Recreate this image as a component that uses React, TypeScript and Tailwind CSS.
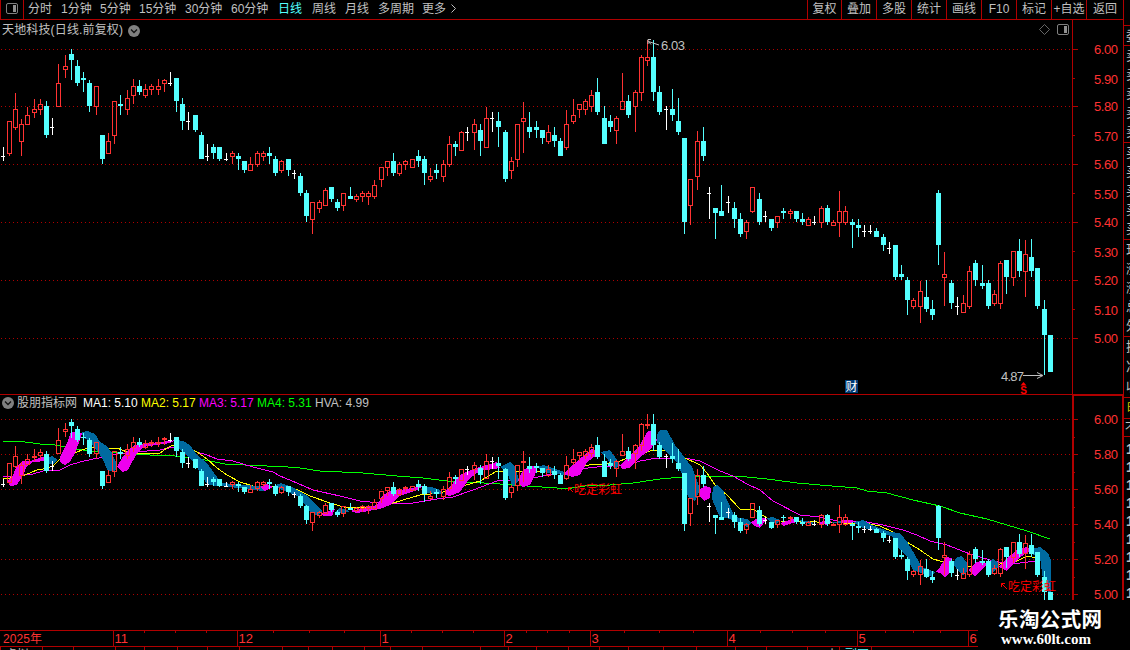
import React from 'react';
import { clsx } from 'clsx';

type Kind = 'r' | 'c' | 'w';
// x, high, body top, body bottom, low, kind (up / down / doji)
type Candle = [number, number, number, number, number, Kind];

const candles: Candle[] = [
  [3, 147, 156, 157, 161, 'w'], [9, 121, 121, 154, 156, 'r'], [15, 93, 109, 128, 130, 'r'], [21, 119, 124, 142, 156, 'r'],
  [27, 107, 115, 125, 125, 'r'], [34, 99, 109, 113, 118, 'r'], [40, 99, 104, 110, 115, 'r'], [46, 101, 106, 135, 138, 'c'],
  [52, 118, 127, 128, 135, 'w'], [58, 64, 83, 107, 107, 'r'], [65, 55, 66, 70, 78, 'r'], [71, 49, 54, 60, 80, 'c'],
  [77, 60, 66, 83, 86, 'c'], [83, 72, 78, 80, 92, 'c'], [89, 80, 83, 106, 112, 'c'], [96, 86, 86, 107, 115, 'r'],
  [102, 135, 135, 159, 164, 'c'], [108, 133, 141, 154, 154, 'r'], [114, 101, 101, 136, 144, 'r'], [120, 95, 104, 106, 115, 'c'],
  [127, 90, 98, 110, 115, 'r'], [133, 79, 86, 96, 104, 'r'], [139, 80, 86, 92, 95, 'c'], [145, 84, 89, 96, 98, 'r'],
  [151, 84, 86, 90, 95, 'r'], [158, 79, 86, 90, 95, 'r'], [164, 79, 80, 84, 92, 'r'], [170, 72, 83, 84, 86, 'w'],
  [176, 78, 78, 101, 112, 'c'], [182, 98, 104, 121, 130, 'c'], [188, 112, 121, 122, 130, 'w'], [195, 115, 115, 130, 132, 'c'],
  [201, 132, 135, 159, 159, 'c'], [207, 144, 156, 157, 161, 'w'], [213, 144, 147, 153, 159, 'c'], [219, 147, 147, 159, 161, 'c'],
  [226, 153, 159, 160, 161, 'w'], [232, 151, 153, 157, 164, 'r'], [238, 153, 156, 159, 170, 'c'], [244, 161, 161, 170, 173, 'c'],
  [250, 157, 164, 171, 171, 'r'], [257, 151, 153, 165, 167, 'r'], [263, 151, 153, 157, 161, 'r'], [269, 147, 153, 156, 164, 'c'],
  [275, 156, 159, 173, 176, 'c'], [281, 160, 161, 171, 173, 'r'], [288, 159, 159, 170, 176, 'c'], [294, 170, 173, 174, 179, 'w'],
  [300, 173, 176, 193, 196, 'c'], [306, 190, 193, 216, 222, 'c'], [312, 202, 202, 220, 234, 'r'], [319, 200, 202, 209, 213, 'r'],
  [325, 188, 190, 206, 206, 'r'], [331, 187, 187, 199, 202, 'c'], [337, 199, 202, 208, 211, 'c'], [343, 193, 193, 206, 211, 'r'],
  [350, 187, 196, 199, 199, 'c'], [356, 194, 196, 200, 202, 'r'], [362, 191, 193, 197, 202, 'r'], [368, 191, 193, 197, 205, 'r'],
  [374, 180, 185, 197, 199, 'r'], [381, 167, 167, 180, 187, 'r'], [387, 161, 161, 168, 176, 'r'], [393, 153, 161, 173, 176, 'c'],
  [399, 162, 164, 174, 176, 'r'], [405, 160, 161, 165, 170, 'r'], [412, 159, 159, 168, 168, 'r'], [418, 150, 156, 161, 167, 'c'],
  [424, 156, 159, 173, 185, 'c'], [430, 168, 176, 180, 182, 'r'], [436, 164, 170, 173, 179, 'c'], [443, 160, 164, 177, 182, 'r'],
  [449, 136, 144, 165, 167, 'r'], [455, 141, 144, 147, 156, 'c'], [461, 131, 132, 151, 151, 'r'], [467, 127, 132, 133, 141, 'w'],
  [474, 119, 124, 133, 150, 'r'], [480, 124, 130, 141, 156, 'c'], [486, 107, 118, 148, 148, 'r'], [492, 112, 118, 119, 132, 'w'],
  [498, 112, 121, 127, 147, 'c'], [505, 130, 132, 179, 182, 'c'], [511, 157, 161, 171, 179, 'r'], [517, 124, 124, 160, 167, 'r'],
  [523, 102, 118, 122, 153, 'r'], [529, 112, 127, 132, 138, 'c'], [536, 121, 127, 130, 138, 'c'], [542, 130, 130, 138, 144, 'c'],
  [548, 125, 132, 142, 144, 'r'], [554, 127, 135, 141, 147, 'c'], [560, 138, 141, 156, 156, 'c'], [566, 110, 124, 148, 150, 'r'],
  [573, 99, 115, 122, 124, 'r'], [579, 104, 104, 110, 118, 'r'], [585, 99, 101, 110, 115, 'r'], [591, 90, 95, 107, 112, 'r'],
  [597, 78, 92, 112, 115, 'c'], [604, 106, 118, 144, 144, 'c'], [610, 115, 121, 127, 132, 'c'], [616, 116, 118, 131, 144, 'r'],
  [622, 73, 101, 110, 110, 'r'], [628, 95, 101, 115, 118, 'c'], [635, 90, 92, 107, 132, 'r'], [641, 55, 57, 93, 101, 'r'],
  [647, 40, 57, 61, 66, 'r'], [653, 40, 57, 92, 101, 'c'], [659, 86, 92, 112, 115, 'c'], [666, 106, 109, 110, 130, 'w'],
  [672, 89, 109, 115, 121, 'c'], [678, 98, 121, 132, 135, 'c'], [684, 138, 138, 222, 234, 'c'], [690, 179, 179, 206, 225, 'r'],
  [697, 131, 141, 177, 190, 'r'], [703, 127, 141, 156, 161, 'c'], [709, 187, 193, 194, 219, 'w'], [715, 208, 208, 213, 239, 'c'],
  [721, 185, 211, 216, 216, 'c'], [728, 196, 202, 203, 213, 'w'], [734, 202, 208, 219, 228, 'c'], [740, 213, 219, 234, 237, 'c'],
  [746, 220, 222, 232, 239, 'r'], [752, 187, 187, 212, 213, 'r'], [759, 193, 199, 222, 225, 'c'], [765, 211, 216, 217, 222, 'w'],
  [771, 219, 219, 228, 231, 'c'], [777, 216, 216, 223, 228, 'r'], [783, 208, 211, 213, 219, 'c'], [790, 209, 211, 214, 219, 'r'],
  [796, 211, 211, 219, 222, 'c'], [802, 213, 219, 222, 225, 'c'], [808, 217, 219, 226, 226, 'r'], [814, 216, 222, 223, 225, 'w'],
  [821, 206, 208, 223, 228, 'r'], [827, 205, 208, 222, 225, 'c'], [833, 220, 222, 226, 226, 'r'], [839, 191, 211, 223, 237, 'r'],
  [845, 206, 211, 223, 225, 'r'], [852, 219, 222, 225, 248, 'c'], [858, 219, 225, 228, 237, 'c'], [864, 225, 231, 232, 237, 'w'],
  [870, 225, 231, 232, 234, 'w'], [876, 228, 231, 237, 237, 'c'], [883, 234, 237, 245, 251, 'c'], [889, 242, 248, 249, 254, 'w'],
  [895, 245, 245, 277, 280, 'c'], [901, 265, 274, 277, 280, 'c'], [907, 277, 280, 300, 315, 'c'], [913, 298, 300, 307, 309, 'r'],
  [920, 281, 291, 307, 323, 'r'], [926, 280, 297, 309, 312, 'c'], [932, 300, 309, 315, 320, 'c'], [938, 190, 193, 245, 265, 'c'],
  [944, 252, 274, 278, 306, 'r'], [951, 280, 283, 303, 309, 'c'], [957, 297, 306, 307, 315, 'w'], [963, 295, 303, 313, 313, 'r'],
  [969, 266, 271, 307, 309, 'r'], [975, 260, 263, 280, 286, 'c'], [982, 265, 283, 286, 289, 'c'], [988, 280, 283, 306, 309, 'c'],
  [994, 290, 294, 304, 306, 'r'], [1000, 261, 263, 304, 309, 'r'], [1006, 260, 260, 277, 294, 'c'], [1013, 251, 251, 278, 286, 'r'],
  [1019, 239, 251, 271, 277, 'c'], [1025, 240, 254, 272, 297, 'r'], [1031, 239, 257, 271, 277, 'c'], [1037, 268, 268, 306, 309, 'c'],
  [1044, 300, 309, 335, 375, 'c'], [1050, 335, 335, 372, 372, 'c'],
];

const UP = '#ff3232';
const DOWN = '#54ffff';
const LINE = '#b00000';

const mainY = (y: number) => y;
// the indicator panel squeezes the same prices into a smaller scale
const subY = (y: number) => Math.round(419.5 + (y - 49.5) * 0.6055);

const months: [number, string][] = [
  [113, '11'], [237, '12'], [380, '1'], [504, '2'], [590, '3'], [727, '4'], [857, '5'], [968, '6'],
];
const weekTicks = [144, 175, 206, 273, 309, 344, 411, 442, 473, 526, 547, 569, 624, 659, 693, 760, 792, 825, 885, 913, 940];
const bottomTicks = [
  0, 42, 73, 115, 144, 177, 207, 239, 282, 308, 332, 364, 390, 422, 480, 508, 536, 568, 599, 628, 663, 696, 735, 766, 807, 839, 871,
];

const pinkBands = [
  '8,480 13,475 16,468 22,461 30,461 43,457 47,458 47,461 33,462 27,466 23,475 17,485 10,486',
  '60,457 67,443 71,432 82,433 80,440 75,453 70,462 65,465 60,462',
  '117,467 122,458 128,450 135,445 150,443 177,440 170,443 143,447 137,453 128,470 123,472',
  '260,487 267,484 273,487 265,491',
  '322,513 335,509 332,516 323,516',
  '350,511 377,505 383,495 392,490 400,490 423,486 417,490 400,496 390,505 380,509 357,513',
  '445,492 453,483 460,475 473,469 497,462 500,468 480,471 470,478 460,492 450,496 445,495',
  '518,480 523,470 530,466 537,466 535,475 530,485 523,487 520,485',
  '563,474 573,465 582,457 592,449 598,451 597,455 587,462 580,475 572,477 567,475',
  '620,465 632,453 640,445 647,432 652,430 657,440 650,450 640,457 630,468 622,469',
  '699,490 705,486 711,488 710,498 704,501 700,497',
  '751,522 760,517 767,519 760,528 753,525',
  '780,523 793,519 800,521 783,526',
  '817,523 827,520 832,522 827,525',
  '842,520 853,520 853,523 842,523',
  '935,572 940,567 946,557 952,558 950,572 945,577 940,573',
  '968,570 977,562 983,560 987,565 975,576',
  '998,567 1007,558 1017,550 1027,547 1032,550 1020,557 1007,571 1001,568',
];

const blueBands = [
  '48,458 52,456 58,460 53,464 48,464',
  '82,432 88,431 95,434 100,442 107,446 112,453 117,465 115,472 108,471 102,458 98,452 88,440 83,437',
  '177,440 183,441 190,445 197,455 207,463 217,477 222,483 247,485 267,487 263,491 230,487 208,485 203,478 197,467 190,458 177,447',
  '275,485 281,483 292,487 306,495 317,505 322,511 318,516 308,510 300,497 280,489',
  '335,512 340,508 350,511 343,514',
  '423,487 432,487 440,490 443,494 437,494 427,493',
  '500,467 510,462 515,467 519,480 513,487 510,480 507,472',
  '537,467 543,465 553,468 567,473 570,476 543,472',
  '600,452 610,450 615,457 620,465 615,469 608,460',
  '657,435 660,430 667,430 675,445 685,458 692,467 697,480 700,490 695,501 688,497 683,477 677,462 667,453 657,442',
  '712,497 713,487 717,485 723,490 727,500 733,513 735,517 747,519 752,523 747,527 740,523 727,518 720,517 713,502',
  '767,518 773,517 780,520 777,524 770,522',
  '800,520 813,522 813,524 802,523',
  '832,522 842,521 842,523 832,523',
  '853,522 863,520 872,525 890,532 900,533 908,543 915,555 922,567 935,572 932,577 913,570 907,557 898,547 893,537 873,530 863,528',
  '953,563 957,557 962,556 967,563 967,572 963,575 957,570',
  '987,563 993,559 998,562 998,568 990,575',
  '1032,549 1040,547 1048,553 1051,560 1051,600 1043,580 1040,557 1033,555',
];

const ma4 =
  '3,441 25,442 40,444 55,445 75,449 100,452 122,453 150,455 175,456 200,459 225,464 245,465 288,467 300,468 320,471 363,473 397,476 423,478 447,481 467,482 500,484 527,486 557,488 572,488 585,486 610,485 633,483 660,479 683,477 707,476 737,476 767,479 797,483 820,485 857,488 867,491 887,493 913,500 940,506 960,513 987,519 1007,525 1027,531 1050,539';
const ma3 =
  '3,477 23,475 33,474 43,471 60,470 70,465 80,462 93,459 105,457 117,454 133,452 147,451 160,450 173,447 187,449 197,452 207,455 217,459 233,461 253,467 273,472 280,476 297,483 313,490 340,496 360,501 380,503 413,503 437,499 453,497 473,490 497,481 513,480 533,478 547,475 570,472 580,469 597,467 627,465 640,461 657,458 685,458 700,461 720,471 733,476 747,484 760,490 773,501 800,515 820,517 837,521 867,522 883,525 903,530 917,535 930,541 947,545 970,554 990,560 1003,563 1020,563 1037,561';
const ma2 =
  '3,478 10,478 25,475 37,470 43,469 53,466 60,459 77,452 90,447 102,450 117,448 127,452 133,454 160,453 167,448 173,445 187,448 197,452 207,459 217,468 227,475 240,482 253,486 267,486 280,487 293,488 300,491 310,496 330,503 347,508 370,507 390,504 403,500 420,495 440,493 463,486 480,481 497,471 523,471 547,472 560,474 570,471 580,467 593,464 603,464 620,461 633,456 650,451 677,450 683,457 700,465 707,473 715,485 727,495 740,509 753,509 767,518 780,521 817,522 870,524 880,526 893,532 907,542 920,550 933,559 940,561 953,565 970,567 1000,564 1017,561 1027,556 1037,558';

function Candles({ mapY }: { mapY: (y: number) => number }) {
  return (
    <g shapeRendering="crispEdges">
      {candles.map(([x, high, top, bottom, low, kind]) => {
        const h = mapY(high);
        const t = mapY(top);
        const b = Math.max(mapY(bottom), t + 1);
        const l = Math.max(mapY(low), b);
        const color = kind === 'r' ? UP : kind === 'c' ? DOWN : '#fff';
        if (kind !== 'r') {
          return (
            <g key={x} fill={color}>
              <rect x={x} y={h} width={1} height={l - h} />
              <rect x={x - 2} y={t} width={kind === 'c' ? 5 : 4} height={b - t} />
            </g>
          );
        }
        // hollow body drawn as four filled edges to stay exactly one pixel wide
        return (
          <g key={x} fill={color}>
            <rect x={x} y={h} width={1} height={t - h} />
            <rect x={x} y={b} width={1} height={l - b} />
            <rect x={x - 2} y={t} width={5} height={1} />
            <rect x={x - 2} y={b - 1} width={5} height={1} />
            <rect x={x - 2} y={t} width={1} height={b - t} />
            <rect x={x + 2} y={t} width={1} height={b - t} />
          </g>
        );
      })}
    </g>
  );
}

function Grid({ ys }: { ys: number[] }) {
  return (
    <g stroke={LINE} strokeDasharray="1 3" shapeRendering="crispEdges">
      {ys.map((y) => (
        <line key={y} x1={1} x2={1072} y1={y + 0.5} y2={y + 0.5} />
      ))}
    </g>
  );
}

function Scale({ major, minor, labels }: { major: number[]; minor: number[]; labels: [number, string][] }) {
  return (
    <g fill={LINE} shapeRendering="crispEdges">
      {major.map((y) => <rect key={y} x={1073} y={y} width={5} height={1} />)}
      {minor.map((y) => <rect key={y} x={1073} y={y} width={2} height={1} />)}
      {labels.map(([y, text]) => (
        <text key={y} x={1094} y={y + 5} fill={UP} fontSize={13} textLength={24}>{text}</text>
      ))}
    </g>
  );
}

function ChevronBadge() {
  return (
    <svg width="12" height="12" viewBox="0 0 12 12">
      <circle cx="6" cy="6" r="6" fill="#808080" />
      <path d="M3 4.5 6 7.5 9 4.5" fill="none" stroke="#111" strokeWidth="1.3" />
    </svg>
  );
}

function PanelIcon({ className }: { className?: string }) {
  return (
    <svg width="12" height="11" viewBox="0 0 12 11" className={className}>
      <rect x="0.5" y="0.5" width="11" height="10" rx="1.5" fill="none" stroke="#808080" />
      <rect x="7" y="2" width="3" height="7" fill="#909090" />
    </svg>
  );
}

const periods = [
  { label: '分时', width: 'w-[33px]' },
  { label: '1分钟', width: 'w-[39px]' },
  { label: '5分钟', width: 'w-[39px]' },
  { label: '15分钟', width: 'w-[46px]' },
  { label: '30分钟', width: 'w-[46px]' },
  { label: '60分钟', width: 'w-[47px]' },
  { label: '日线', width: 'w-[34px]', active: true },
  { label: '周线', width: 'w-[33px]' },
  { label: '月线', width: 'w-[33px]' },
  { label: '多周期', width: 'w-[44px]' },
  { label: '更多', width: 'w-[28px]' },
];

const tools = ['复权', '叠加', '多股', '统计', '画线', 'F10', '标记', '+自选', '返回'];

function Toolbar() {
  return (
    <nav className="flex h-[20px] w-[1124px] border-b border-[#b00000]">
      <div className="flex w-[24px] justify-center border-x border-[#b00000] pt-[3px]">
        <PanelIcon />
      </div>
      <div className="flex pl-1 leading-[19px]">
        {periods.map((p) => (
          <span key={p.label} className={clsx('whitespace-nowrap', p.width, p.active && 'text-[#54ffff]')}>
            {p.label}
          </span>
        ))}
        <svg width="8" height="18" viewBox="0 0 8 18" fill="none" stroke="#c0c0c0">
          <path d="M1.5 4.5 5.5 8.5 1.5 12.5" />
        </svg>
      </div>
      <div className="ml-auto flex leading-[19px]">
        {tools.map((t, i) => (
          <span
            key={t}
            className={clsx(
              'border-l border-[#b00000] text-center whitespace-nowrap',
              i === 0 ? 'w-[34px]' : i === tools.length - 1 ? 'w-[38px] border-r' : 'w-[35px]',
            )}
          >
            {t}
          </span>
        ))}
      </div>
    </nav>
  );
}

function PricePanel() {
  return (
    <section className="relative h-[374px]">
      <svg width="1124" height="374" viewBox="0 20 1124 374">
        <Grid ys={[49, 106, 164, 222, 280, 338]} />
        <Candles mapY={mainY} />
        <rect x={1072} y={20} width={1} height={374} fill={LINE} />
        <Scale
          major={[49, 106, 164, 222, 280, 338]}
          minor={[78, 135, 193, 251, 309]}
          labels={[
            [49, '6.00'], [79, '5.90'], [106, '5.80'], [136, '5.70'], [164, '5.60'], [194, '5.50'],
            [222, '5.40'], [252, '5.30'], [280, '5.20'], [310, '5.10'], [338, '5.00'],
          ]}
        />
        {/* high and low markers */}
        <g fill="none" stroke="#c0c0c0">
          <path d="M659 45 L648.5 41.5 M651 39.5 H648 V44 M648.5 41.5 L651 44.5" />
          <path d="M1023 375.5 H1042 M1037 372.5 L1043 375.5 L1037 378.5" />
        </g>
        <text x={661} y={50} fontSize={13} fill="#c0c0c0" textLength={24}>6.03</text>
        <text x={1001} y={381} fontSize={13} fill="#c0c0c0" textLength={23}>4.87</text>
        <rect x={845} y={380} width={13} height={13} fill="#003a74" />
        <text x={845.5} y={391} fontSize={12} fill="#fff">财</text>
        <path d="M1020.5 385.5 L1023.5 382 L1026.5 385.5 Z" fill="#f00" />
        <text x={1020.3} y={393.5} fontSize={10} fontWeight={700} fill="#f00">S</text>
        <path d="M1044.5 24.5 L1049.5 29.5 L1044.5 34.5 L1039.5 29.5 Z" fill="none" stroke="#808080" strokeWidth={0.8} />
      </svg>
      <div className="absolute top-[2px] left-[2px] flex items-center gap-[3px] leading-[17px]">
        <span className="w-[123px] tracking-[0.15px] whitespace-nowrap">天地科技(日线.前复权)</span>
        <ChevronBadge />
      </div>
      <PanelIcon className="absolute top-[4px] left-[1057px]" />
    </section>
  );
}

function IndicatorPanel() {
  return (
    <section className="relative h-[236px] border-t border-[#b00000]">
      <svg width="1124" height="235" viewBox="0 395 1124 235">
        <Grid ys={[419, 454, 489, 524, 559, 594]} />
        <g fill="none" shapeRendering="crispEdges">
          <polyline points={ma4} stroke="#00ff00" />
          <polyline points={ma3} stroke="#ff00ff" />
          <polyline points={ma2} stroke="#ffff00" />
        </g>
        <g shapeRendering="crispEdges">
          {blueBands.map((p) => <polygon key={p} points={p} fill="#006aa0" />)}
          {pinkBands.map((p) => <polygon key={p} points={p} fill="#ee00ee" />)}
        </g>
        <Candles mapY={subY} />
        <g fill="none" stroke="#f00">
          <path d="M573 492 L568.5 487.5 M568.5 491 V487.5 H572" />
          <path d="M1007 589 L1001.5 583.5 M1001.5 587 V583.5 H1005" />
        </g>
        <text x={574} y={494} fontSize={12} fill="#f00" textLength={48}>吃定彩虹</text>
        <text x={1008} y={591} fontSize={12} fill="#f00" textLength={48}>吃定彩虹</text>
        <g fill={LINE} shapeRendering="crispEdges">
          <rect x={1072} y={395} width={2} height={205} />
          <rect x={1122} y={395} width={2} height={205} />
          <rect x={1072} y={395} width={52} height={1} />
        </g>
        <Scale
          major={[419, 454, 489, 524, 559, 594]}
          minor={[437, 472, 507, 542, 577]}
          labels={[[419, '6.00'], [454, '5.80'], [489, '5.60'], [524, '5.40'], [559, '5.20'], [594, '5.00']]}
        />
      </svg>
      <div className="absolute top-0 left-[2px] flex items-center leading-[16px] whitespace-nowrap">
        <ChevronBadge />
        <span className="ml-[3px] w-[66px]">股朋指标网</span>
        <span className="w-[58px] text-white">MA1: 5.10</span>
        <span className="w-[58px] text-[#ffff00]">MA2: 5.17</span>
        <span className="w-[58px] text-[#ff00ff]">MA3: 5.17</span>
        <span className="w-[58px] text-[#00ff00]">MA4: 5.31</span>
        <span>HVA: 4.99</span>
      </div>
    </section>
  );
}

function TimeAxis() {
  return (
    <svg width="1124" height="20" viewBox="0 630 1124 20">
      <g fill={LINE} shapeRendering="crispEdges">
        <rect x={0} y={630} width={978} height={1} />
        <rect x={0} y={646} width={978} height={1} />
        {months.map(([x]) => <rect key={x} x={x} y={630} width={1} height={16} />)}
        {weekTicks.map((x) => <rect key={x} x={x} y={631} width={1} height={2} />)}
        {bottomTicks.map((x) => <rect key={x} x={x} y={647} width={1} height={3} />)}
      </g>
      <g fontSize={13} fill={UP}>
        <text x={3} y={643} textLength={39} fontSize={12}>2025年</text>
        {months.map(([x, label]) => <text key={x} x={x + 1.5} y={643}>{label}</text>)}
      </g>
      <g fontSize={12} fill="#c0c0c0">
        <text x={5} y={659}>虚拟</text>
        <text x={826} y={659}>小</text>
        <text x={845} y={658.5} fill={DOWN}>副图</text>
      </g>
    </svg>
  );
}

const quoteGroups = [
  { height: 'h-[20px]', rows: ['委'] },
  { height: 'h-[97px]', rows: ['卖', '卖', '卖', '卖', '卖'] },
  { height: 'h-[97px]', rows: ['买', '买', '买', '买', '买'] },
  { height: 'h-[97px]', rows: ['现', '涨', '涨', '总', '外'] },
  { height: 'h-[61px]', rows: ['换', '净', '收'] },
];

// only the first pixels of the quote column stay visible at the right edge
function QuoteStrip() {
  return (
    <aside className="flex w-[7px] flex-col overflow-hidden">
      <div className="h-[25px] border-l border-[#b00000]" />
      {quoteGroups.map((g, i) => (
        <div key={i} className={clsx('flex flex-col justify-around border-t border-l border-[#b00000] pl-[2px]', g.height)}>
          {g.rows.map((r, j) => (
            <span key={j} className="h-4 text-[13px] leading-4">{r}</span>
          ))}
        </div>
      ))}
      <div className="h-[21px] border-t border-[#b00000] pl-[4px] leading-5 text-[#d0d000]">时</div>
      <div className="h-[19px] border-y border-[#b00000] pl-[2px] leading-[18px]">不</div>
      <div className="flex flex-col pl-[3px] pt-[3px] text-[14px] font-bold">
        {[0, 1, 2, 3, 4, 5, 6, 7, 8].map((n) => (
          <span key={n} className="h-[18px] leading-[18px]">1</span>
        ))}
      </div>
    </aside>
  );
}

export default function App() {
  return (
    <div className="relative h-[650px] w-[1130px] overflow-hidden bg-black font-['Liberation_Sans','Noto_Sans_CJK_SC',sans-serif] text-[12px] text-[#c0c0c0]">
      <div className="flex">
        <main className="flex w-[1124px] flex-none flex-col">
          <Toolbar />
          <PricePanel />
          <IndicatorPanel />
          <TimeAxis />
        </main>
        <div className="-ml-px">
          <QuoteStrip />
        </div>
      </div>
      {/* site watermark */}
      <div className="absolute top-[600px] left-[978px] h-[50px] w-[152px] bg-black text-white">
        <svg width="152" height="50" viewBox="978 600 152 50" fill="#fff">
          <text x={998} y={626.5} fontSize={20.5} fontWeight={700} textLength={104}>乐淘公式网</text>
          <text x={1001} y={644} fontSize={15} fontWeight={700} textLength={90} className="font-['Liberation_Serif',serif]">
            www.60lt.com
          </text>
        </svg>
      </div>
    </div>
  );
}
